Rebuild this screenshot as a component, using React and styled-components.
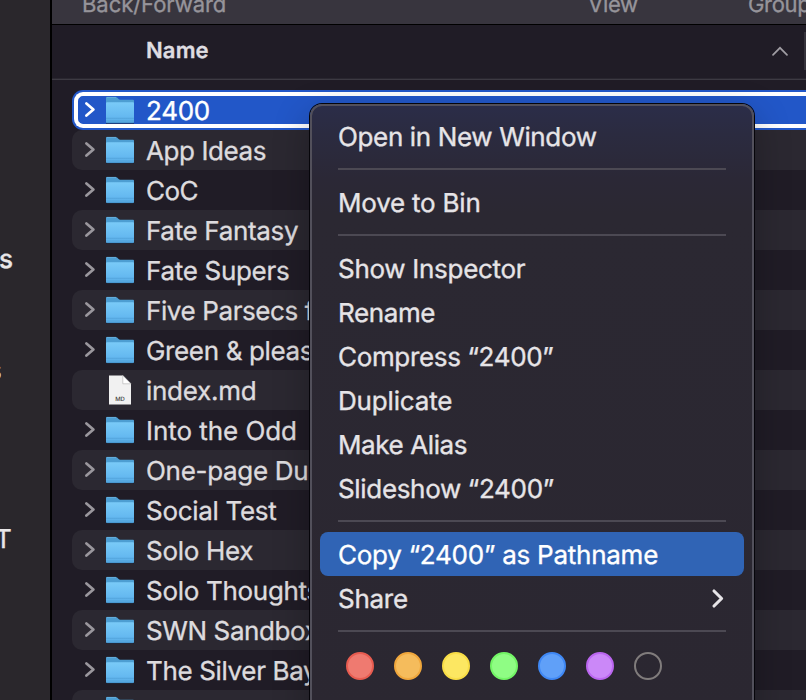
import React from "react";
import styled, { createGlobalStyle } from "styled-components";

const GlobalStyle = createGlobalStyle`
  * { box-sizing: border-box; }
  body {
    margin: 0;
    overflow: hidden;
    background: #201c26;
    font-family: Inter, "Liberation Sans", sans-serif;
    text-rendering: geometricPrecision;
    -webkit-text-stroke: 0.35px currentColor;
  }
`;

const Window = styled.div`
  position: relative;
  display: flex;
  width: 806px;
  height: 700px;
  overflow: hidden;
`;

const Sidebar = styled.aside`
  flex: none;
  width: 52px;
  padding-top: 240px;
  display: flex;
  flex-direction: column;
  align-items: flex-start;
  overflow: hidden;
  background: #2a272c;
  border-right: 2px solid #000;
`;

const SidebarItem = styled.div`
  height: 40px;
  line-height: 40px;
  font-size: 26px;
  font-weight: ${(p) => p.$weight || 400};
  color: #e8e6e8;
  margin-bottom: ${(p) => p.$gap}px;
  margin-left: ${(p) => p.$shift}px;
`;

const Main = styled.main`
  flex: 1;
  min-width: 0;
  display: flex;
  flex-direction: column;
  background: #201c26;
`;

const Toolbar = styled.div`
  flex: none;
  height: 25px;
  display: flex;
  overflow: hidden;
  background: #38353e;
  border-bottom: 1px solid #000;
`;

const ToolbarLabel = styled.div`
  flex: none;
  width: ${(p) => p.$width}px;
  height: 26px;
  margin-top: -8px;
  line-height: 26px;
  font-size: 22px;
  letter-spacing: ${(p) => p.$track || 0}px;
  color: #96949a;
  white-space: nowrap;

  &:first-child { margin-left: 30px; }
`;

const Header = styled.div`
  flex: none;
  height: 55px;
  display: flex;
  align-items: center;
  padding: 0 0 2px 94px;
  border-bottom: 1px solid #3d3a43;
  box-shadow: inset 0 -1px #2a2730;
`;

const HeaderTitle = styled.div`
  flex: 1;
  font-size: 22px;
  line-height: 26px;
  font-weight: 600;
  letter-spacing: 0.15px;
  color: #dfdde1;
`;

const SortCaret = styled.svg`
  flex: none;
  width: 18px;
  height: 12px;
  margin-right: 15px;
`;

const ColumnEdge = styled.div`
  width: 2px;
  height: 38px;
  background: #36333c;
`;

const FileList = styled.div`
  display: flex;
  flex-direction: column;
  padding: 10px 0 0 20px;
`;

const Row = styled.div`
  flex: none;
  height: 40px;
  display: flex;
  align-items: center;
  padding-left: 11px;
  border-radius: 10px 0 0 10px;
  background: ${(p) => (p.$striped ? "#2b2831" : "transparent")};
  color: #dddbde;
`;

const SelectedRow = styled.div`
  flex: none;
  height: 40px;
  display: flex;
  padding: 2px 0 2px 2px;
  border-radius: 11px 0 0 11px;
  background: #2257c8;
  color: #fff;
`;

const FocusRing = styled.div`
  flex: 1;
  padding-left: 5px;
  display: flex;
  align-items: center;
  border: 4px solid #fff;
  border-right: 0;
  border-radius: 9px 0 0 9px;
`;

const Disclosure = styled.svg`
  flex: none;
  width: 14px;
  height: 20px;
  margin-right: 9px;
  color: ${(p) => (p.$selected ? "#fff" : "#9a979d")};
  visibility: ${(p) => (p.$hidden ? "hidden" : "visible")};
`;

const FileIcon = styled.svg`
  flex: none;
  width: 28px;
  height: 30px;
`;

const FileName = styled.div`
  margin-left: 12px;
  padding-top: 3px;
  height: 40px;
  line-height: 38px;
  font-size: 26px;
  letter-spacing: ${(p) => p.$track}px;
  white-space: nowrap;
`;

const Menu = styled.div`
  position: absolute;
  left: 310px;
  top: 104px;
  width: 444px;
  height: 640px;
  padding: 8px;
  display: flex;
  flex-direction: column;
  border: 2px solid #52505b;
  border-radius: 12px;
  background: linear-gradient(#2b2d49 0, #2b2b40 30px, #2b2836 75px, #2b2832 110px, #2b2731 100%);
  background-origin: border-box;
  box-shadow: 0 0 0 1px #06050a, 0 12px 36px rgba(0, 0, 0, 0.28);
`;

const MenuItem = styled.div`
  flex: none;
  height: 44px;
  display: flex;
  align-items: center;
  justify-content: space-between;
  padding: 4px 18px 0;
  border-radius: 8px;
  font-size: 26px;
  line-height: 40px;
  white-space: nowrap;
  letter-spacing: ${(p) => p.$track}px;
  color: ${(p) => (p.$active ? "#fff" : "#e6e4e7")};
  background: ${(p) => (p.$active ? "#3064b5" : "transparent")};
`;

const Separator = styled.div`
  flex: none;
  height: 2px;
  margin: 10px 18px;
  background: #4c4953;
`;

const SubmenuArrow = styled.svg`
  width: 14px;
  height: 22px;
  margin: 0 1px 4px 0;
`;

const Tags = styled.div`
  display: flex;
  gap: 20px;
  padding: 10px 26px;
`;

const Tag = styled.div`
  width: 28px;
  height: 28px;
  border-radius: 50%;
  background: ${(p) => p.$fill};
  border: 2px solid ${(p) => p.$edge};
`;

const files = [
  { name: "App Ideas", track: -0.4 },
  { name: "CoC", track: -0.6 },
  { name: "Fate Fantasy", track: -0.34 },
  { name: "Fate Supers", track: -0.3 },
  { name: "Five Parsecs f", track: -0.4 },
  { name: "Green & pleas", track: -0.35 },
  { name: "index.md", track: -0.27, document: true },
  { name: "Into the Odd", track: -0.05 },
  { name: "One-page Du", track: -0.3 },
  { name: "Social Test", track: -0.3 },
  { name: "Solo Hex", track: -0.3 },
  { name: "Solo Thoughts", track: -0.3 },
  { name: "SWN Sandbox", track: -0.4 },
  { name: "The Silver Bay", track: -0.35 },
  { name: "", track: 0 },
];

const menu = [
  [{ label: "Open in New Window", track: -0.36 }],
  [{ label: "Move to Bin", track: -0.22 }],
  [
    { label: "Show Inspector", track: -0.29 },
    { label: "Rename", track: -0.38 },
    { label: "Compress “2400”", track: -0.34 },
    { label: "Duplicate", track: -0.16 },
    { label: "Make Alias", track: -0.4 },
    { label: "Slideshow “2400”", track: -0.33 },
  ],
  [
    { label: "Copy “2400” as Pathname", track: -0.25, active: true },
    { label: "Share", track: -0.28, submenu: true },
  ],
];

const tags = [
  ["#ef7a70", "#e85c50"],
  ["#f5bc5c", "#f0a73c"],
  ["#fce762", "#f8dd46"],
  ["#8ffd84", "#72f565"],
  ["#60a0f8", "#3f88f5"],
  ["#cb88f8", "#bb66f0"],
  ["transparent", "#807c7c"],
];

function Chevron({ selected, hidden }) {
  return (
    <Disclosure viewBox="0 0 14 20" $selected={selected} $hidden={hidden}>
      <path d="M3.4 3.4 10.4 9.5 3.4 15.6" fill="none" stroke="currentColor" strokeWidth="2.7" strokeLinecap="round" strokeLinejoin="round" />
    </Disclosure>
  );
}

function Folder() {
  return (
    <FileIcon viewBox="0 0 28 30">
      <defs>
        <linearGradient id="folderFront" x1="0" y1="0" x2="0" y2="1">
          <stop offset="0" stopColor="#7acbf8" />
          <stop offset="0.72" stopColor="#64b8f0" />
          <stop offset="1" stopColor="#56a9e2" />
        </linearGradient>
      </defs>
      <path d="M0 3Q0 2 1 2H9.6Q10.6 2 11.4 2.8L12.3 3.8Q13.1 4.7 14.4 4.7H27Q28 4.7 28 5.7V12H0Z" fill="#4d9ed2" />
      <path d="M.6 2.4H10" stroke="#6cb4df" strokeWidth=".8" />
      <path d="M0 28.3H28" stroke="#15131a" strokeOpacity=".6" strokeWidth="1" />
      <path d="M0 8.2Q0 7.2 1 7.2H27Q28 7.2 28 8.2V27Q28 28 27 28H1Q0 28 0 27Z" fill="url(#folderFront)" />
      <path d="M0 23.3H28M0 26H28" stroke="#4b9bd3" strokeWidth=".7" strokeOpacity=".8" />
      <path d="M.5 27.7H27.5" stroke="#3f8cc4" strokeWidth=".7" />
    </FileIcon>
  );
}

function Document() {
  return (
    <FileIcon viewBox="0 0 28 30">
      <path d="M3 .5H16.8L25 8.8V29.5H3Z" fill="#f1f1f1" />
      <path d="M16.8 .5V8.8H25Z" fill="#fff" stroke="#b9b9b9" strokeWidth=".7" />
      <text x="14" y="26.3" fontSize="5.9" fontWeight="500" textAnchor="middle" fill="#3c3c3c" fontFamily="Inter, sans-serif">MD</text>
    </FileIcon>
  );
}

export default function App() {
  return (
    <Window>
      <GlobalStyle />
      <Sidebar>
        <SidebarItem $weight={500} $shift={-1} $gap={71}>s</SidebarItem>
        <SidebarItem $shift={-12} $gap={129}>s</SidebarItem>
        <SidebarItem $shift={-5} $gap={0}>T</SidebarItem>
      </Sidebar>
      <Main>
        <Toolbar>
          <ToolbarLabel $width={506} $track={-0.05}>Back/Forward</ToolbarLabel>
          <ToolbarLabel $width={160} $track={-0.3}>View</ToolbarLabel>
          <ToolbarLabel $width={80} $track={-0.3}>Group</ToolbarLabel>
        </Toolbar>
        <Header>
          <HeaderTitle>Name</HeaderTitle>
          <SortCaret viewBox="0 0 18 12">
            <path d="M2 9.8 9 2.8 16 9.8" fill="none" stroke="#a09da3" strokeWidth="1.7" strokeLinecap="round" />
          </SortCaret>
          <ColumnEdge />
        </Header>
        <FileList>
          <SelectedRow>
            <FocusRing>
              <Chevron selected />
              <Folder />
              <FileName $track={-0.3}>2400</FileName>
            </FocusRing>
          </SelectedRow>
          {files.map((file, i) => (
            <Row key={i} $striped={i % 2 === 0}>
              <Chevron hidden={file.document} />
              {file.document ? <Document /> : <Folder />}
              <FileName $track={file.track}>{file.name}</FileName>
            </Row>
          ))}
        </FileList>
      </Main>
      <Menu>
        {menu.map((group, g) => (
          <React.Fragment key={g}>
            {group.map((item) => (
              <MenuItem key={item.label} $track={item.track} $active={item.active}>
                {item.label}
                {item.submenu && (
                  <SubmenuArrow viewBox="0 0 14 22">
                    <path d="M3 4 10.6 11.5 3 19" fill="none" stroke="currentColor" strokeWidth="3.1" strokeLinecap="round" strokeLinejoin="round" />
                  </SubmenuArrow>
                )}
              </MenuItem>
            ))}
            <Separator />
          </React.Fragment>
        ))}
        <Tags>
          {tags.map(([fill, edge]) => (
            <Tag key={edge} $fill={fill} $edge={edge} />
          ))}
        </Tags>
      </Menu>
    </Window>
  );
}
